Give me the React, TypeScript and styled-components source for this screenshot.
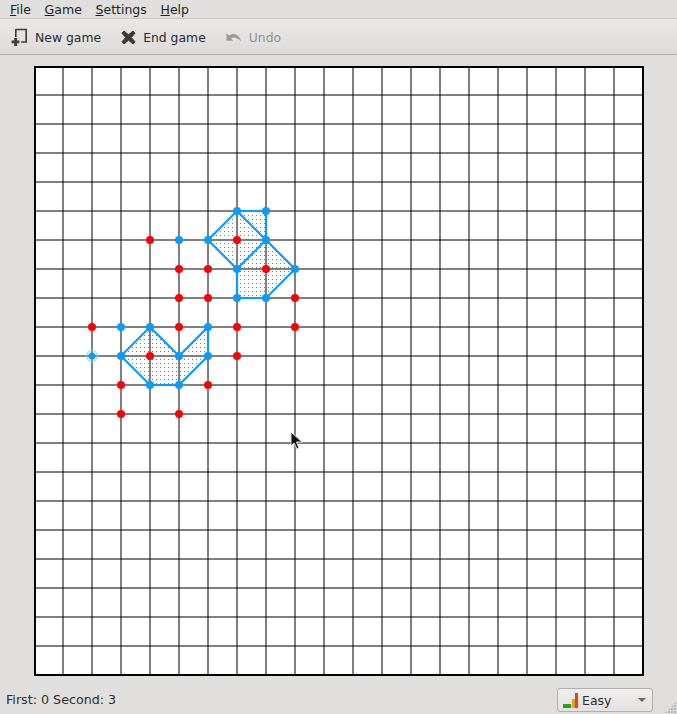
import React from 'react'
import styled, { createGlobalStyle } from 'styled-components'

const CELL = 29
const CELLS = 21
const BOARD_SIZE = CELL * CELLS + 1

const GlobalStyle = createGlobalStyle`
  html, body {
    margin: 0;
    padding: 0;
    height: 100%;
    overflow: hidden;
    background: #e0dfdd;
  }
  #root {
    height: 100%;
  }
`

type Point = [number, number]

// board coordinates: column, row
const bluePoints: Point[] = [
  [7, 5], [8, 5], [5, 6], [6, 6], [8, 6], [7, 7], [9, 7], [7, 8], [8, 8],
  [3, 9], [4, 9], [6, 9], [3, 10], [5, 10], [6, 10], [4, 11], [5, 11],
]

const redPoints: Point[] = [
  [4, 6], [7, 6], [5, 7], [6, 7], [8, 7], [5, 8], [6, 8], [9, 8], [2, 9],
  [5, 9], [7, 9], [9, 9], [4, 10], [7, 10], [3, 11], [6, 11], [3, 12], [5, 12],
]

const lastMove: Point = [2, 10]

const areas: Point[][] = [
  [[6, 6], [7, 5], [8, 5], [8, 6], [9, 7], [8, 8], [7, 8], [7, 7]],
  [[3, 10], [4, 9], [5, 10], [6, 9], [6, 10], [5, 11], [4, 11]],
]

const innerEdges: [Point, Point][] = [
  [[7, 5], [8, 6]],
  [[8, 6], [7, 7]],
]

const BLUE = '#0a9bff'
const px = (v: number) => v * CELL

const Board: React.FC = () => {
  const lines = Array.from({ length: CELLS + 1 }, (_, i) => i)
  return (
    <BoardSvg width={BOARD_SIZE} height={BOARD_SIZE} viewBox={`0 0 ${BOARD_SIZE} ${BOARD_SIZE}`}>
      <defs>
        <pattern id="dots" x="0" y="0" width="4" height="4" patternUnits="userSpaceOnUse">
          <rect x="2" y="1" width="1" height="1" fill={BLUE} />
        </pattern>
      </defs>
      <rect width={BOARD_SIZE} height={BOARD_SIZE} fill="#fff" />
      {lines.map((i) => (
        <g key={i} stroke="#000" strokeWidth="1">
          <line x1={px(i)} y1={0} x2={px(i)} y2={px(CELLS)} />
          <line x1={0} y1={px(i)} x2={px(CELLS)} y2={px(i)} />
        </g>
      ))}
      <rect x="1" y="1" width={BOARD_SIZE - 2} height={BOARD_SIZE - 2} fill="none" stroke="#000" strokeWidth="2" />
      {areas.map((area) => (
        <polygon
          key={area.join()}
          points={area.map(([c, r]) => `${px(c)},${px(r)}`).join(' ')}
          fill="url(#dots)"
          stroke={BLUE}
          strokeWidth="2.2"
        />
      ))}
      {innerEdges.map(([a, b]) => (
        <line key={`${a}-${b}`} x1={px(a[0])} y1={px(a[1])} x2={px(b[0])} y2={px(b[1])} stroke={BLUE} strokeWidth="2.2" />
      ))}
      {redPoints.map(([c, r]) => (
        <circle key={`r${c}-${r}`} cx={px(c)} cy={px(r)} r="4" fill="#ff0000" />
      ))}
      {bluePoints.map(([c, r]) => (
        <circle key={`b${c}-${r}`} cx={px(c)} cy={px(r)} r="4" fill={BLUE} />
      ))}
      <circle cx={px(lastMove[0])} cy={px(lastMove[1])} r="5.5" fill="none" stroke="#8ccdfb" strokeWidth="1" />
      <circle cx={px(lastMove[0])} cy={px(lastMove[1])} r="3.5" fill={BLUE} />
    </BoardSvg>
  )
}

const NewGameIcon = () => (
  <svg width="17" height="18" viewBox="0 0 17 18">
    <path d="M4.8 1.5h10.400v12.500h-5" fill="none" stroke="#3c3c3c" strokeWidth="1.6" />
    <path d="M4.8 1v8" fill="none" stroke="#3c3c3c" strokeWidth="1.6" />
    <path d="M3.2 10h2.800v2.500h2.400v2.700H6V18H3.200v-2.800H.6v-2.700h2.600z" fill="#3c3c3c" />
  </svg>
)

const EndGameIcon = () => (
  <svg width="15" height="15" viewBox="0 0 15 15">
    <path
      d="M3 1 7.500 4.800 12 1l2 2.200L10.300 7.500 14 11.800 12 14 7.500 10.200 3 14l-2-2.200L4.700 7.500 1 3.200z"
      fill="#3a3a3a"
      stroke="#3a3a3a"
      strokeLinejoin="round"
    />
  </svg>
)

const UndoIcon = () => (
  <svg width="16" height="10" viewBox="0 0 17 10">
    <path d="M.5 1v8h7L5.200 6.400C8.500 4.800 12 5.600 16 9.600 15 3.500 8.500-.8 3.300 3.400z" fill="#9a9a98" />
  </svg>
)

const LevelIcon = () => (
  <svg width="16" height="16" viewBox="0 0 16 16">
    <rect x="0" y="12" width="8" height="4" fill="#1aa51a" />
    <rect x="9" y="7" width="3" height="9" fill="#eb9a22" />
    <rect x="12" y="1" width="3" height="15" fill="#e8421c" />
  </svg>
)

const CursorIcon = () => (
  <svg width="14" height="20" viewBox="0 0 14 20">
    <path d="M1 1v14l3-3 3 6 2-1-2.500-6H12z" fill="#111" stroke="#e8e8e8" strokeWidth="1" />
  </svg>
)

const menus = ['File', 'Game', 'Settings', 'Help']

const App: React.FC = () => (
  <Window>
    <GlobalStyle />
    <MenuBar>
      {menus.map((m) => (
        <MenuItem key={m}>
          <u>{m[0]}</u>
          {m.slice(1)}
        </MenuItem>
      ))}
    </MenuBar>
    <ToolBar>
      <ToolButton>
        <NewGameIcon />
        New game
      </ToolButton>
      <ToolButton>
        <EndGameIcon />
        End game
      </ToolButton>
      <ToolButton disabled>
        <UndoIcon />
        Undo
      </ToolButton>
    </ToolBar>
    <BoardArea>
      <Board />
      <Cursor>
        <CursorIcon />
      </Cursor>
    </BoardArea>
    <StatusBar>
      <Score>First: 0 Second: 3</Score>
      <LevelSelect>
        <LevelIcon />
        <LevelLabel>Easy</LevelLabel>
        <Arrow />
      </LevelSelect>
      <Grip />
    </StatusBar>
  </Window>
)

export default App

const Window = styled.div`
  display: flex;
  flex-direction: column;
  height: 714px;
  width: 677px;
  position: relative;
  background: #e0dfdd;
  color: #2e2e2e;
  font-family: 'DejaVu Sans', sans-serif;
  font-size: 12.5px;
`

const MenuBar = styled.div`
  display: flex;
  height: 17px;
  padding: 1px 0 0 4px;
  align-items: center;
  background: #e0dfdd;
  border-bottom: 1px solid #c8c7c5;
`

const MenuItem = styled.div`
  padding: 0 6px;
  margin-right: 1.7px;
  line-height: 17px;
  color: #1f1f1f;
`

const ToolBar = styled.div`
  display: flex;
  align-items: center;
  height: 34px;
  padding: 1px 0 0 11px;
  gap: 20px;
  font-size: 12.4px;
  background: linear-gradient(#e9e8e6, #dddcda);
  border-bottom: 1px solid #b2b1af;
`

const ToolButton = styled.div<{ disabled?: boolean }>`
  display: flex;
  align-items: center;
  gap: 7px;
  color: ${({ disabled }) => (disabled ? '#8f8f8d' : '#2a2a2a')};
`

const BoardArea = styled.div`
  position: relative;
  flex: 1;
  padding: 11px 0 0 34px;
`

const BoardSvg = styled.svg`
  display: block;
`

const Cursor = styled.div`
  position: absolute;
  left: 290px;
  top: 376px;
  line-height: 0;
`

const StatusBar = styled.div`
  position: relative;
  display: flex;
  align-items: flex-end;
  justify-content: space-between;
  box-sizing: border-box;
  height: 38px;
  padding: 0 24px 2px 6px;
`

const Score = styled.div`
  line-height: 24px;
  font-size: 12.7px;
  color: #2e2e2e;
`

const LevelSelect = styled.div`
  display: flex;
  align-items: center;
  box-sizing: border-box;
  width: 96px;
  height: 24px;
  padding: 0 6px 0 5px;
  gap: 3px;
  border: 1px solid #b0afad;
  border-radius: 3px;
  background: linear-gradient(#efeeec, #e3e2e0);
`

const LevelLabel = styled.span`
  flex: 1;
`

const Arrow = styled.span`
  width: 0;
  height: 0;
  border-left: 4px solid transparent;
  border-right: 4px solid transparent;
  border-top: 4px solid #666;
`

const Grip = styled.div`
  position: absolute;
  right: 1px;
  bottom: 1px;
  width: 11px;
  height: 11px;
  background-image: radial-gradient(circle at 1px 1px, #b5b4b2 1px, transparent 1px);
  background-size: 3px 3px;
  clip-path: polygon(100% 0, 100% 100%, 0 100%);
`
